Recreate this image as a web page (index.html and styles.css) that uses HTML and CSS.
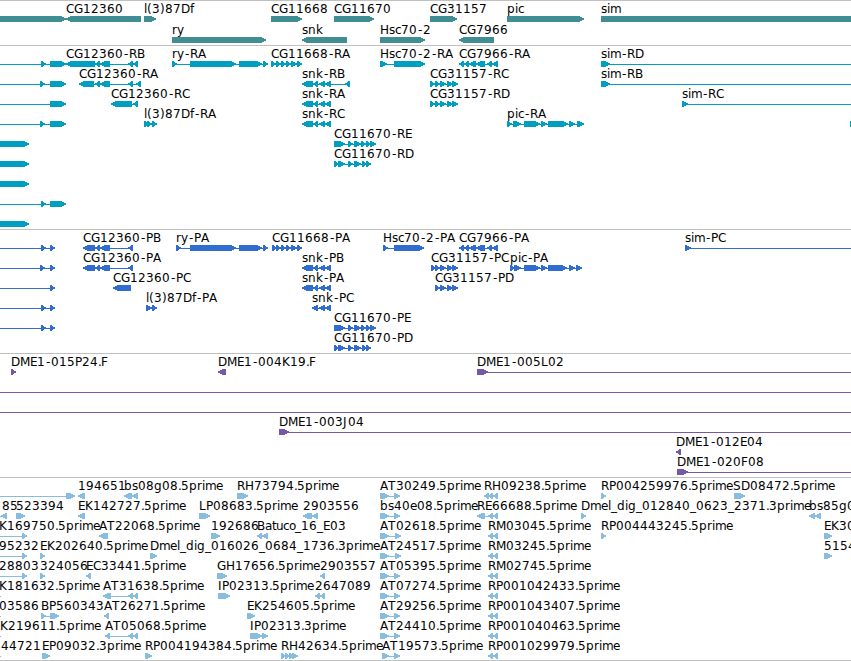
FILE: index.html
```html
<!DOCTYPE html>
<html lang="en">
<head>
    <meta charset="UTF-8">
    <meta name="viewport" content="width=device-width, initial-scale=1.0">
    <title>Genome tracks</title>
    <link rel="stylesheet" href="styles.css">
</head>
<body>
    <div class="browser">
        <svg class="track genes" id="genes"></svg>
        <svg class="track transcripts" id="transcripts"></svg>
        <svg class="track proteins" id="proteins"></svg>
        <svg class="track bacs" id="bacs"></svg>
        <svg class="track ests" id="ests"></svg>
    </div>
    <script src="tracks.js"></script>
</body>
</html>
```
FILE: styles.css
```css
body {
    margin: 0;
    background-color: #fff;
    font-family: "DejaVu Sans", sans-serif;
    overflow: hidden;
}

.browser {
    display: flex;
    flex-direction: column;
    width: 851px;
    height: 661px;
    box-sizing: border-box;
    border-bottom: 1px solid #c0c0c0;
}

.track {
    display: block;
    box-sizing: border-box;
    flex: none;
    width: 100%;
    height: 124px;
    border-top: 1px solid #c0c0c0;
    overflow: hidden;
}

.track text {
    font-size: 12px;
    fill: #000;
}

.track path,
.track rect {
    shape-rendering: crispEdges;
}

.genes {
    height: 45px;
    fill: #408e94;
}

.transcripts {
    height: 184px;
    fill: #009fc1;
}

.proteins {
    fill: #306dce;
}

.bacs {
    fill: #7559a8;
}

.ests {
    height: 183px;
    fill: #88bddf;
}
```
FILE: tracks.js
```js
// feature: [label, strand, label x, exons, line start, line end]
const L = -10;   // runs off the left side
const R = 860;   // runs off the right side

const snk = [[302, 313], [313, 318], [319, 325], [325, 331]];
const cg7966 = [[459, 464], [464, 469], [469, 476], [476, 485], [487, 492], [492, 498]];
const cg31157 = [[430, 435], [435, 440], [440, 446], [447, 453], [452, 458]];
const cg11670a = [[334, 345], [348, 353], [354, 361], [361, 366], [366, 370], [370, 376]];
const cg11670b = [[334, 339], [338, 345], [348, 353], [354, 361], [362, 366], [366, 371]];
const at = [[380, 389], [394, 400]];
const rm = [[488, 493], [493, 498]];

const tracks = {
    genes: [
        [
            ['', '>', 0, [[L, 66]]],
            ['CG12360', '<', 66, [[66, 141]]],
            ['l(3)87Df', '>', 144, [[144, 156]]],
            ['CG11668', '>', 271, [[271, 302]]],
            ['CG11670', '>', 334, [[334, 374]]],
            ['CG31157', '>', 430, [[430, 457]]],
            ['pic', '>', 507, [[507, 584]]],
            ['sim', '>', 601, [[601, R]]]
        ],
        [
            ['ry', '>', 172, [[172, 266]]],
            ['snk', '<', 302, [[302, 347]]],
            ['Hsc70-2', '>', 380, [[380, 425]]],
            ['CG7966', '<', 459, [[459, 494]]]
        ]
    ],
    transcripts: [
        [
            ['', '>', 0, [[41, 46], [50, 66]], L],
            ['CG12360-RB', '<', 66, [[66, 95], [95, 100], [100, 110], [128, 133], [133, 138]]],
            ['ry-RA', '>', 172, [[172, 177], [190, 236], [239, 262], [263, 268]]],
            ['CG11668-RA', '>', 271, [[271, 276], [276, 281], [281, 286], [286, 291], [291, 297], [297, 302]]],
            ['Hsc70-2-RA', '>', 380, [[380, 387], [394, 425]]],
            ['CG7966-RA', '<', 459, cg7966],
            ['sim-RD', '>', 601, [[601, 610]], 601, R]
        ],
        [
            ['', '>', 0, [[40, 45], [50, 66]], L],
            ['CG12360-RA', '<', 79, [[79, 94], [95, 100], [100, 110], [128, 133], [136, 141]]],
            ['snk-RB', '<', 302, [...snk, [345, 350]]],
            ['CG31157-RC', '>', 430, cg31157],
            ['sim-RB', '>', 601, [[601, 610]], 601, R]
        ],
        [
            ['', '>', 0, [[50, 66]], L],
            ['CG12360-RC', '<', 111, [[111, 132], [133, 138]]],
            ['snk-RA', '<', 302, snk],
            ['CG31157-RD', '>', 430, cg31157],
            ['sim-RC', '>', 682, [[682, 688]], 682, R]
        ],
        [
            ['', '>', 0, [[40, 45], [50, 66]], L],
            ['l(3)87Df-RA', '>', 144, [[144, 149], [147, 152], [152, 157]]],
            ['snk-RC', '<', 302, snk],
            ['pic-RA', '>', 507, [[507, 512], [513, 521], [524, 540], [541, 547], [548, 568], [569, 575], [577, 584]]],
            ['', '>', 0, [[850, R]]]
        ],
        [
            ['', '>', 0, [[L, 29]]],
            ['CG11670-RE', '>', 334, cg11670a]
        ],
        [
            ['', '>', 0, [[L, 29]]],
            ['CG11670-RD', '>', 334, cg11670b]
        ],
        [['', '>', 0, [[L, 29]]]],
        [['', '>', 0, [[41, 46], [50, 66]], L]],
        [['', '>', 0, [[L, 29]]]]
    ],
    proteins: [
        [
            ['', '>', 0, [[41, 46], [50, 55]], L],
            ['CG12360-PB', '<', 83, [[83, 95], [95, 100], [100, 110], [128, 133]]],
            ['ry-PA', '>', 176, [[176, 181], [190, 236], [239, 262], [263, 268]]],
            ['CG11668-PA', '>', 272, [[272, 277], [276, 281], [281, 286], [286, 291], [291, 297], [297, 302]]],
            ['Hsc70-2-PA', '>', 383, [[383, 388], [394, 424]]],
            ['CG7966-PA', '<', 459, cg7966],
            ['sim-PC', '>', 685, [[685, 691]], 685, R]
        ],
        [
            ['', '>', 0, [[40, 45], [50, 55]], L],
            ['CG12360-PA', '<', 83, [[83, 95], [95, 100], [100, 110], [128, 133]]],
            ['snk-PB', '<', 302, snk],
            ['CG31157-PC', '>', 431, [[431, 436], [435, 440], [440, 446], [447, 453], [452, 458]]],
            ['pic-PA', '>', 510, [[510, 515], [514, 521], [524, 540], [541, 547], [548, 567], [569, 575], [576, 582]]]
        ],
        [
            ['', '>', 0, [[50, 55]], L],
            ['CG12360-PC', '<', 113, [[113, 131]]],
            ['snk-PA', '<', 302, snk],
            ['CG31157-PD', '>', 435, [[435, 440], [440, 446], [447, 453], [452, 458]]]
        ],
        [
            ['', '>', 0, [[41, 46], [50, 55]], L],
            ['l(3)87Df-PA', '>', 146, [[146, 152], [152, 157]]],
            ['snk-PC', '<', 312, [[312, 318], [319, 325], [325, 331]]]
        ],
        [
            ['', '>', 0, [[41, 46], [50, 55]], L],
            ['CG11670-PE', '>', 334, cg11670a]
        ],
        [['CG11670-PD', '>', 334, cg11670b]]
    ],
    bacs: [
        [
            ['DME1-015P24.F', '>', 11, [[11, 16]]],
            ['DME1-004K19.F', '<', 218, [[218, 226]]],
            ['DME1-005L02', '>', 477, [[477, 488]], 477, R]
        ],
        [['', '>', 0, [], L, R]],
        [['', '>', 0, [], L, R]],
        [['DME1-003J04', '>', 279, [[279, 289]], 279, R]],
        [['DME1-012E04', '<', 676, [[676, 681]]]],
        [['DME1-020F08', '>', 677, [[677, 688]], 677, R]]
    ],
    ests: [
        [
            ['', '>', 0, [[66, 75]], L],
            ['194651', '<', 78, [[78, 85]]],
            ['bs08g08.5prime', '<', 124, [[124, 132], [132, 138]]],
            ['RH73794.5prime', '>', 237, [[237, 248]]],
            ['AT30249.5prime', '>', 380, at],
            ['RH09238.5prime', '<', 484, [[484, 489], [488, 493], [493, 498]]],
            ['RP004259976.5prime', '>', 601, [[601, 606]]],
            ['SD08472.5prime', '>', 733, [[734, 745]]]
        ],
        [
            ['85', '<', 2, [[1, 7]], L],
            ['523394', '>', 16, [[16, 25]]],
            ['EK142727.5prime', '<', 78, [[78, 85]]],
            ['LP08683.5prime', '>', 199, [[199, 210]]],
            ['2903556', '<', 303, [[303, 312], [312, 318]]],
            ['bs40e08.5prime', '>', 380, at],
            ['RE66688.5prime', '<', 477, [[477, 485], [488, 493], [493, 498]]],
            ['Dmel_dig_012840_0623_2371.3prime', '>', 581, [[581, 586]]],
            ['bs85g0', '<', 809, [[809, 815], [815, 821]]]
        ],
        [
            ['EK169750.5prime', '>', -8, [[22, 27]], L],
            ['AT22068.5prime', '<', 99, [[99, 108]]],
            ['192686', '>', 211, [[211, 220]]],
            ['Batuco_16_E03', '<', 257, [[257, 262], [262, 268]]],
            ['AT02618.5prime', '>', 380, [[380, 389], [395, 401]]],
            ['RM03045.5prime', '<', 488, rm],
            ['RP004443245.5prime', '>', 601, [[601, 606]]],
            ['EK30', '>', 824, [[824, 832]]]
        ],
        [
            ['95232', '>', -1, [[22, 27]], L],
            ['EK202640.5prime', '>', 40, [[40, 45]]],
            ['Dmel_dig_016026_0684_1736.3prime', '>', 150, [[150, 157]]],
            ['AT24517.5prime', '>', 380, [[380, 389], [395, 401]]],
            ['RM03245.5prime', '<', 488, rm],
            ['5154', '>', 824, [[824, 832]]]
        ],
        [
            ['28803', '>', -1, [[22, 27]], L],
            ['324056', '>', 40, [[40, 45]]],
            ['EC33441.5prime', '<', 86, [[86, 91]]],
            ['GH17656.5prime', '>', 217, [[217, 227]]],
            ['2903557', '<', 320, [[320, 325]]],
            ['AT05395.5prime', '>', 380, at],
            ['RM02745.5prime', '<', 488, rm]
        ],
        [
            ['EK181632.5prime', '>', -8, [], L, 1],
            ['AT31638.5prime', '<', 103, [[103, 111], [128, 133], [133, 138]]],
            ['IP02313.5prime', '>', 218, [[218, 230]]],
            ['2647089', '<', 315, [[315, 320], [320, 325]]],
            ['AT07274.5prime', '>', 380, at],
            ['RP001042433.5prime', '<', 488, rm]
        ],
        [
            ['03586', '>', -1, [], L, 1],
            ['BP560343', '>', 41, [[41, 46], [50, 59]]],
            ['AT26271.5prime', '<', 104, [[104, 109]]],
            ['EK254605.5prime', '>', 247, [[247, 255]]],
            ['AT29256.5prime', '>', 380, at],
            ['RP001043407.5prime', '<', 488, rm]
        ],
        [
            ['EK219611.5prime', '>', -7, [], L, 1],
            ['AT05068.5prime', '<', 105, [[105, 110], [128, 133], [133, 138]]],
            ['IP02313.3prime', '>', 250, [[250, 262], [262, 268]]],
            ['AT24410.5prime', '>', 380, at],
            ['RP001040463.5prime', '<', 488, rm]
        ],
        [
            ['44721', '>', 1, [], L, 1],
            ['EP09032.3prime', '>', 42, [[42, 50]]],
            ['RP004194384.5prime', '>', 145, [[145, 152]]],
            ['RH42634.5prime', '>', 281, [[281, 286], [285, 289], [289, 293], [292, 298]]],
            ['AT19573.5prime', '>', 382, [[382, 389], [394, 400]]],
            ['RP001029979.5prime', '<', 488, rm]
        ]
    ]
};

// whole pixel glyph advances, anything else is 8
const advance = {
    G: 9, D: 9, H: 9, M: 10, E: 7, P: 7, L: 7, I: 4, J: 5, F: 7,
    '-': 6, '.': 3, '_': 6, '(': 5, ')': 5,
    r: 5, i: 3, l: 3, m: 11, e: 7, s: 6, c: 6, k: 7, f: 4, t: 4, o: 6, a: 7, u: 7, y: 7
};

const NS = 'http://www.w3.org/2000/svg';

function add(svg, tag, attrs) {
    const el = document.createElementNS(NS, tag);
    for (const name in attrs) {
        el.setAttribute(name, attrs[name]);
    }
    svg.appendChild(el);
    return el;
}

function drawExon(svg, strand, start, end, y) {
    const head = Math.min(6, end - start);
    const d = strand === '>'
        ? `M${start} ${y}H${end - head + 1}L${end} ${y + 2.5}V${y + 3.5}L${end - head + 1} ${y + 6}H${start}Z`
        : `M${end} ${y}H${start + head - 1}L${start} ${y + 2.5}V${y + 3.5}L${start + head - 1} ${y + 6}H${end}Z`;
    add(svg, 'path', { d: d });
}

function drawLabel(svg, label, x, y) {
    const xs = [];
    for (const ch of label) {
        // centre the hyphen in its cell
        xs.push(ch === '-' ? x + 1 : x);
        x += advance[ch] || 8;
    }
    add(svg, 'text', { x: xs.join(' '), y: y }).textContent = label;
}

for (const id in tracks) {
    const svg = document.getElementById(id);
    const rowHeight = id === 'genes' ? 21 : 20;
    tracks[id].forEach((row, i) => {
        const top = i * rowHeight;
        row.forEach(([label, strand, x, exons, from, to]) => {
            const start = from !== undefined ? from : exons[0][0];
            const end = to !== undefined ? to : exons[exons.length - 1][1];
            add(svg, 'rect', { x: start, y: top + 18, width: end - start, height: 1 });
            exons.forEach(([s, e]) => drawExon(svg, strand, s, e, top + 15));
            if (label) {
                drawLabel(svg, label, x, top + 12);
            }
        });
    });
}
```
